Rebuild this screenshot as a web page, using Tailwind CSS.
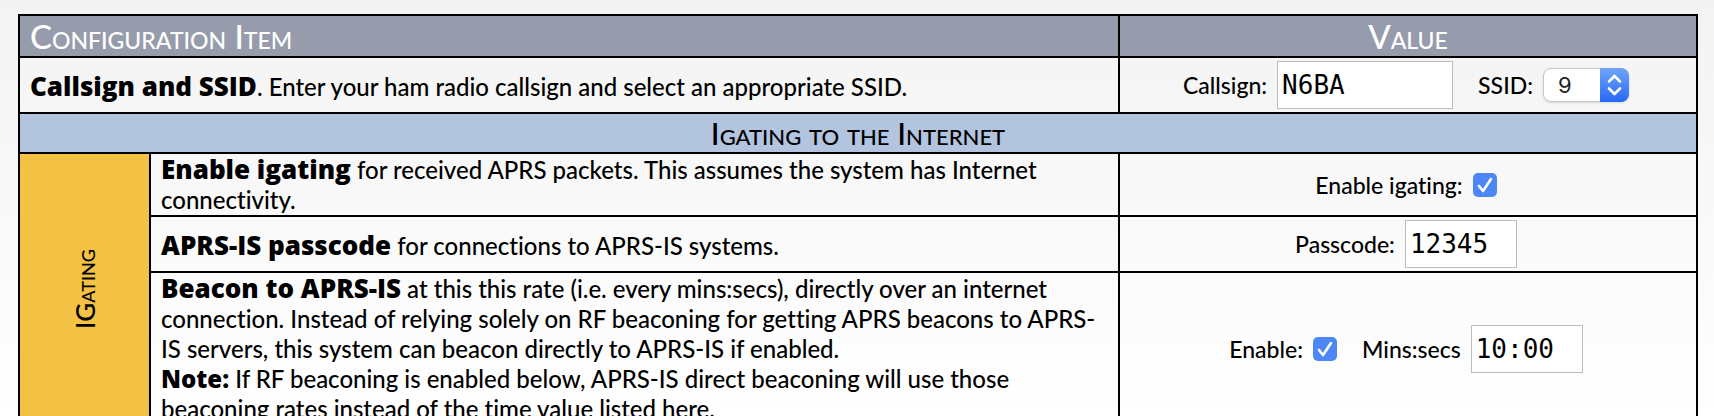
<!DOCTYPE html>
<html lang="en">
<head>
<meta charset="utf-8">
<title>Configuration</title>
<script src="https://cdn.jsdelivr.net/npm/@tailwindcss/browser@4"></script>
</head>
<body class="min-h-screen bg-white bg-linear-to-b from-[#f3f3f3] to-white pt-[14px] pr-4 pl-[18px] font-['Lato',sans-serif] text-[24px] leading-[30px] font-medium text-black [font-variant-ligatures:none]">
<table class="w-full table-fixed border-collapse border-2 border-black">
  <colgroup>
    <col class="w-[131px]">
    <col>
    <col class="w-[578px]">
  </colgroup>
  <thead>
    <tr class="h-[42px] bg-[#969cac] text-[33px] leading-10 text-white [font-variant-caps:small-caps]">
      <th colspan="2" class="border-2 border-black px-[10px] py-0 text-left font-medium">Configuration Item</th>
      <th class="border-2 border-black p-0 text-center font-medium">Value</th>
    </tr>
  </thead>
  <tbody>
    <tr class="h-14">
      <td colspan="2" class="border-2 border-black px-[10px] pt-[2px] pb-0"><b class="font-['Open_Sans',sans-serif] text-[26px] font-extrabold">Callsign and SSID</b>. Enter your ham radio callsign and select an appropriate SSID.</td>
      <td class="border-2 border-black p-0">
        <div class="flex items-center justify-center pr-1 text-[23px]">
          <label for="callsign">Callsign:</label>
          <input id="callsign" type="text" value="N6BA" class="ml-[10px] h-12 w-44 border border-[#bdbdbd] bg-white px-1 font-['DejaVu_Sans_Mono',monospace] text-[26px] outline-none">
          <label for="ssid" class="ml-[25px]">SSID:</label>
          <div class="relative ml-[10px] flex">
            <select id="ssid" class="h-[34px] w-[86px] appearance-none rounded-lg border border-[#c8c8c8] bg-white pl-[14px] font-['Inter',sans-serif] text-[22px] leading-7 font-normal text-[#222222] shadow-sm outline-none">
              <option>9</option>
            </select>
            <svg class="pointer-events-none absolute top-0 right-0 h-[34px] w-[29px] rounded-r-lg bg-linear-to-b from-[#72a4f6] to-[#2667f6]" viewBox="0 0 29 34" fill="none" stroke="white" stroke-width="2.600" stroke-linecap="round" stroke-linejoin="round"><path d="M9 13.500 14.500 8l5.500 5.500M9 20.500l5.500 5.500 5.500-5.500"/></svg>
          </div>
        </div>
      </td>
    </tr>
    <tr class="h-10 bg-[#b3c4de]">
      <th colspan="3" class="border-2 border-black p-0 text-center text-[31px] leading-[38px] font-medium [font-variant-caps:small-caps]">Igating to the Internet</th>
    </tr>
    <tr class="h-[62px]">
      <th rowspan="3" class="border-2 border-black bg-[#f3c143] p-0 font-medium">
        <div class="flex items-center justify-center"><span class="rotate-180 text-[26px] [font-variant-caps:small-caps] [writing-mode:vertical-rl]">IGating</span></div>
      </th>
      <td class="border-2 border-black px-[10px] py-0"><b class="font-['Open_Sans',sans-serif] text-[26px] font-extrabold">Enable igating</b> for received APRS packets. This assumes the system has Internet<br>connectivity.</td>
      <td class="border-2 border-black p-0">
        <div class="flex items-center justify-center pr-1 text-[23px]">
          <label for="igating">Enable igating:</label>
          <div class="ml-[10px] grid">
            <input id="igating" type="checkbox" checked class="col-start-1 row-start-1 size-6 appearance-none rounded-[5px] bg-white checked:bg-[#4d87f5]">
            <svg class="pointer-events-none col-start-1 row-start-1 size-6" viewBox="0 0 24 24" fill="none" stroke="white" stroke-width="2.600" stroke-linecap="round" stroke-linejoin="round"><path d="M6 13l4 5 8-12"/></svg>
          </div>
        </div>
      </td>
    </tr>
    <tr class="h-14">
      <td class="border-2 border-black px-[10px] pt-[2px] pb-0"><b class="font-['Open_Sans',sans-serif] text-[26px] font-extrabold">APRS-IS passcode</b> for connections to APRS-IS systems.</td>
      <td class="border-2 border-black p-0">
        <div class="flex items-center justify-center pr-1 text-[23px]">
          <label for="passcode">Passcode:</label>
          <input id="passcode" type="text" value="12345" class="ml-[10px] h-12 w-28 border border-[#bdbdbd] bg-white px-1 font-['DejaVu_Sans_Mono',monospace] text-[26px] outline-none">
        </div>
      </td>
    </tr>
    <tr>
      <td class="border-2 border-black px-[10px] py-0"><b class="font-['Open_Sans',sans-serif] text-[26px] font-extrabold">Beacon to APRS-IS</b> at this this rate (i.e. every mins:secs), directly over an internet<br>connection. Instead of relying solely on RF beaconing for getting APRS beacons to APRS-<br>IS servers, this system can beacon directly to APRS-IS if enabled.<br><b class="font-['Open_Sans',sans-serif] font-extrabold">Note:</b> If RF beaconing is enabled below, APRS-IS direct beaconing will use those<br>beaconing rates instead of the time value listed here.</td>
      <td class="border-2 border-black p-0">
        <div class="flex items-center justify-center pr-1 text-[23px]">
          <label for="beacon">Enable:</label>
          <div class="ml-[10px] grid">
            <input id="beacon" type="checkbox" checked class="col-start-1 row-start-1 size-6 appearance-none rounded-[5px] bg-white checked:bg-[#4d87f5]">
            <svg class="pointer-events-none col-start-1 row-start-1 size-6" viewBox="0 0 24 24" fill="none" stroke="white" stroke-width="2.600" stroke-linecap="round" stroke-linejoin="round"><path d="M6 13l4 5 8-12"/></svg>
          </div>
          <label for="rate" class="ml-[25px]">Mins:secs</label>
          <input id="rate" type="text" value="10:00" class="ml-[10px] h-12 w-28 border border-[#bdbdbd] bg-white px-1 font-['DejaVu_Sans_Mono',monospace] text-[26px] outline-none">
        </div>
      </td>
    </tr>
  </tbody>
</table>
</body>
</html>
